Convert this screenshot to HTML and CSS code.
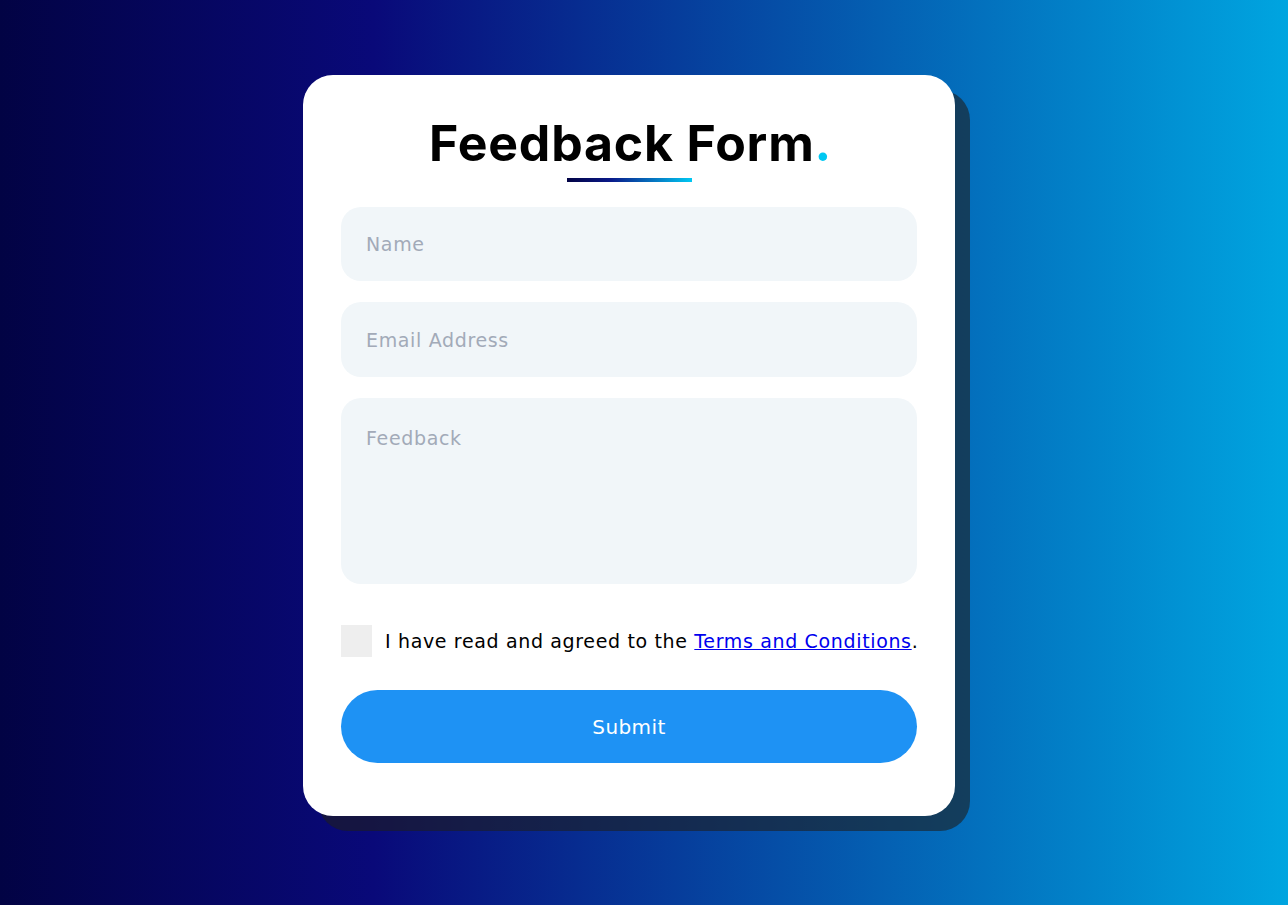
FILE: index.html
```html
<!DOCTYPE html>
<html lang="en">
<head>
<meta charset="utf-8">
<title>Feedback Form</title>
<link rel="stylesheet" href="styles.css">
</head>
<body>
<main class="page">
  <form class="card">
    <h1 class="title">Feedback Form<span class="dot">.</span></h1>
    <div class="bar"></div>
    <input class="field name" type="text" placeholder="Name">
    <input class="field" type="email" placeholder="Email Address">
    <textarea class="field area" placeholder="Feedback"></textarea>
    <label class="agree">
      <input class="check" type="checkbox">
      <span class="agree-text">I have read and agreed to the <a href="#" class="link">Terms and Conditions</a>.</span>
    </label>
    <button class="submit" type="button">Submit</button>
  </form>
</main>
</body>
</html>
```

FILE: styles.css
```css
* { box-sizing: border-box; }
html, body { margin: 0; padding: 0; }
body {
  font-family: "DejaVu Sans", Inter, sans-serif;
  min-height: 905px;
  background: linear-gradient(90deg, #020344 0%, #090979 29%, #00a5e0 100%);
}
.page {
  display: flex;
  justify-content: center;
  padding-top: 75px;
  padding-right: 30px;
}
.card {
  width: 652px;
  background: #fff;
  border-radius: 30px;
  box-shadow: 15px 15px 0 rgba(30, 30, 30, 0.6);
  padding: 38px 38px 53px;
  display: flex;
  flex-direction: column;
}
.title {
  margin: 0;
  text-align: center;
  font-family: Inter, sans-serif;
  font-size: 50px;
  line-height: 60px;
  font-weight: 700;
  color: #000;
  letter-spacing: 0.8px;
  padding-left: 3px;
}
.dot { color: #00c8f2; }
.bar {
  width: 125px;
  height: 4px;
  margin: 5px auto 25px;
  background: linear-gradient(90deg, #020344, #0a1a8a 35%, #00c8f2);
}
.field {
  display: block;
  width: 100%;
  height: 75px;
  border: none;
  outline: none;
  border-radius: 20px;
  background: #f1f6f9;
  padding: 0 25px;
  font-family: inherit;
  font-size: 19px;
  letter-spacing: 0.65px;
  font-weight: 400;
  color: #333;
  margin-bottom: 21px;
}
.field.name { height: 74px; }
.field::placeholder { color: #a2aab8; }
.area {
  height: 186px;
  padding: 29px 25px;
  resize: none;
  margin-bottom: 41px;
}
.agree {
  display: flex;
  align-items: center;
  gap: 13px;
  font-size: 19px;
  letter-spacing: 0.65px;
  color: #000;
  height: 32px;
}
.agree-text { white-space: nowrap; }
.check {
  appearance: none;
  -webkit-appearance: none;
  margin: 0;
  width: 31px;
  height: 32px;
  background: #eeeeee;
  border: none;
  flex: none;
}
.link { color: #0000ee; }
.submit {
  margin-top: 33px;
  height: 73px;
  border: none;
  border-radius: 37px;
  background: #1e92f4;
  color: #fff;
  font-family: inherit;
  font-size: 20px;
  letter-spacing: 0.4px;
  font-weight: 500;
}
```
